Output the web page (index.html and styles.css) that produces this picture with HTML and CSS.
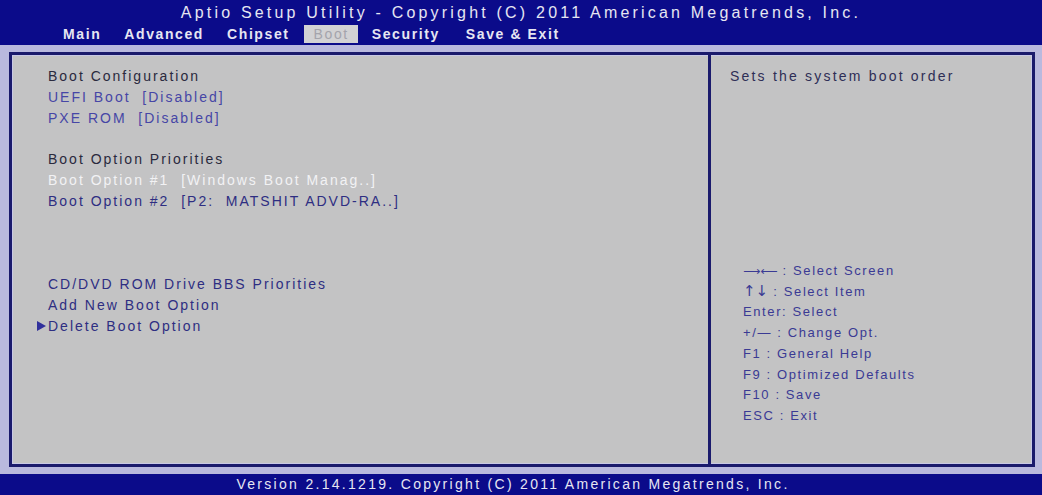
FILE: index.html
```html
<!DOCTYPE html>
<html>
<head>
<meta charset="utf-8">
<link rel="stylesheet" href="styles.css">
</head>
<body>
<div class="screen">
  <header class="header">
    <div class="title">Aptio Setup Utility - Copyright (C) 2011 American Megatrends, Inc.</div>
    <nav class="tabs">
      <span class="tab">Main</span>
      <span class="tab">Advanced</span>
      <span class="tab chipset">Chipset</span>
      <span class="tab active">Boot</span>
      <span class="tab security">Security</span>
      <span class="tab">Save &amp; Exit</span>
    </nav>
  </header>
  <main class="body">
    <div class="frame">
      <section class="left">
        <div class="line dark">Boot Configuration</div>
        <div class="line blue">UEFI Boot&nbsp; [Disabled]</div>
        <div class="line blue">PXE ROM&nbsp; [Disabled]</div>
        <div class="line"></div>
        <div class="line dark">Boot Option Priorities</div>
        <div class="line hl">Boot Option #1&nbsp; [Windows Boot Manag..]</div>
        <div class="line navy">Boot Option #2&nbsp; [P2:&nbsp; MATSHIT ADVD-RA..]</div>
        <div class="line"></div>
        <div class="line"></div>
        <div class="line"></div>
        <div class="line navy">CD/DVD ROM Drive BBS Priorities</div>
        <div class="line navy">Add New Boot Option</div>
        <div class="line navy sub"><span class="arrow"></span>Delete Boot Option</div>
      </section>
      <aside class="right">
        <div class="desc">Sets the system boot order</div>
        <div class="help">
          <div class="hline"><span class="keys">⟶⟵</span> : Select Screen</div>
          <div class="hline"><span class="keys ud">↑↓</span> : Select Item</div>
          <div class="hline">Enter: Select</div>
          <div class="hline">+/— : Change Opt.</div>
          <div class="hline">F1 : General Help</div>
          <div class="hline">F9 : Optimized Defaults</div>
          <div class="hline">F10 : Save</div>
          <div class="hline">ESC : Exit</div>
        </div>
      </aside>
    </div>
  </main>
  <footer class="footer">Version 2.14.1219. Copyright (C) 2011 American Megatrends, Inc.</footer>
</div>
</body>
</html>
```

FILE: styles.css
```css
html, body {
  margin: 0;
  padding: 0;
}
body {
  width: 1042px;
  height: 495px;
  overflow: hidden;
  background: #b9b9de;
  font-family: "Liberation Sans", Arial, sans-serif;
}
.screen {
  display: flex;
  flex-direction: column;
  height: 495px;
}
.header {
  background: #0b0b8a;
  height: 45px;
  color: #e6e6f2;
  display: flex;
  flex-direction: column;
}
.title {
  text-align: center;
  font-size: 16px;
  letter-spacing: 3.2px;
  padding-top: 3px;
  height: 19px;
  line-height: 19px;
}
.tabs {
  display: flex;
  padding-left: 58px;
  height: 18px;
  line-height: 18px;
  font-size: 14px;
  letter-spacing: 1.6px;
  font-weight: bold;
  margin-top: 3px;
}
.tab {
  padding: 0 5px;
  margin-right: 13px;
}
.tab.chipset {
  margin-right: 9px;
}
.tab.active {
  background: #d2d2d4;
  color: #a4a4ac;
  font-weight: normal;
  padding: 0 9px 0 10px;
  margin-right: 9px;
}
.tab.security {
  margin-right: 16px;
}
.body {
  flex: 1;
  padding: 7px 7px 7px 9px;
  display: flex;
}
.frame {
  flex: 1;
  display: flex;
  border: 3px solid #1a1a6c;
  background: #c3c3c4;
  box-shadow: inset 0 0 0 1px #c8c8e6;
}
.left {
  width: 699px;
  border-right: 3px solid #1a1a6c;
  padding: 11px 0 0 36px;
  box-sizing: border-box;
  font-size: 14px;
  letter-spacing: 2px;
}
.line {
  height: 20.8px;
  line-height: 20.8px;
  white-space: nowrap;
}
.dark { color: #2a2a3e; }
.blue { color: #4646a6; }
.navy { color: #2e2e82; }
.hl { color: #f2f2f4; }
.sub {
  display: flex;
  align-items: center;
  margin-left: -11px;
}
.arrow {
  width: 0;
  height: 0;
  border-top: 5px solid transparent;
  border-bottom: 5px solid transparent;
  border-left: 9px solid #30309c;
  margin-right: 2px;
}
.right {
  flex: 1;
  display: flex;
  flex-direction: column;
  padding: 11px 0 37px 19px;
}
.desc {
  color: #2e2e56;
  line-height: 20px;
  height: 20px;
  font-size: 14px;
  letter-spacing: 2.2px;
  white-space: nowrap;
}
.help {
  margin-top: auto;
  padding-left: 13px;
  color: #3a3a94;
  font-size: 13px;
  letter-spacing: 1.6px;
}
.hline {
  height: 20.8px;
  line-height: 20.8px;
  white-space: nowrap;
}
.keys {
  font-family: "DejaVu Sans", sans-serif;
  font-size: 12px;
  letter-spacing: 0;
}
.keys.ud {
  font-size: 15px;
  letter-spacing: 0;
}
.footer {
  background: #0b0b8a;
  color: #e6e6f2;
  height: 21px;
  line-height: 21px;
  text-align: center;
  font-size: 14px;
  letter-spacing: 2.3px;
  padding-right: 16px;
}
```
